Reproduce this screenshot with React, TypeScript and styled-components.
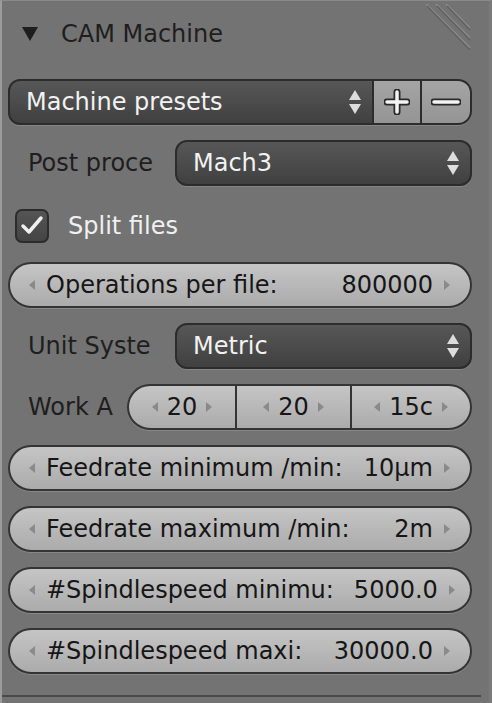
import React from "react";
import styled, { createGlobalStyle } from "styled-components";

const Global = createGlobalStyle`
  html, body { margin: 0; padding: 0; background: #737373; }
  * { box-sizing: border-box; }
`;

const Panel = styled.div`
  width: 492px;
  height: 703px;
  background: #737373;
  border-left: 2px solid #9c9c9c;
  border-top: 1px solid #8a8a8a;
  border-right: 3px solid #7a7a7a;
  font-family: "DejaVu Sans", sans-serif;
  display: flex;
  flex-direction: column;
  position: relative;
  overflow: hidden;
`;

const Header = styled.div`
  height: 72px;
  display: flex;
  align-items: center;
  padding-left: 19px;
  gap: 22px;
  color: #1e1e1e;
  font-size: 24px;
  padding-bottom: 7px;
`;

const Grip = styled.svg`
  position: absolute;
  right: 15px;
  top: 3px;
`;

const Body = styled.div`
  display: flex;
  flex-direction: column;
  padding: 6px 17px 0 6px;
`;

const Row = styled.div<{ $h?: number; $mb?: number }>`
  height: ${(p) => p.$h ?? 46}px;
  margin-bottom: ${(p) => p.$mb ?? 15}px;
  display: flex;
  align-items: center;
`;

const Label = styled.div<{ $w: number }>`
  width: ${(p) => p.$w}px;
  padding-left: 20px;
  font-size: 24px;
  color: #1e1e1e;
  white-space: nowrap;
  overflow: hidden;
`;

const Dropdown = styled.div<{ $left?: boolean }>`
  flex: 1;
  height: 100%;
  display: flex;
  align-items: center;
  justify-content: space-between;
  padding: 0 10px 0 16px;
  background: linear-gradient(#575757, #404040);
  border: 2px solid #2c2c2c;
  border-radius: ${(p) => (p.$left ? "12px 0 0 12px" : "12px")};
  color: #f2f2f2;
  font-size: 24px;
  box-shadow: 0 1px 0 #868686;
`;

const Tool = styled.div<{ $last?: boolean }>`
  width: ${(p) => (p.$last ? 50 : 48)}px;
  height: 100%;
  background: linear-gradient(#a4a4a4, #959595);
  border: 2px solid #2c2c2c;
  border-left: none;
  border-radius: ${(p) => (p.$last ? "0 14px 14px 0" : "0")};
  display: flex;
  align-items: center;
  justify-content: center;
  box-shadow: 0 1px 0 #868686;
`;

const Pill = styled.div`
  flex: 1;
  height: 100%;
  display: flex;
  border: 2px solid #343434;
  border-radius: 23px;
  overflow: hidden;
  background: linear-gradient(#c5c5c5, #ababab);
  box-shadow: 0 1px 0 #888;
`;

const Field = styled.div<{ $center?: boolean; $sep?: boolean; $w?: number }>`
  flex: ${(p) => (p.$w ? `0 0 ${p.$w}px` : "1")};
  display: flex;
  align-items: center;
  padding: 0 19px 0 18px;
  gap: 10px;
  font-size: 24px;
  color: #161616;
  border-left: ${(p) => (p.$sep ? "2px solid #343434" : "none")};
  justify-content: ${(p) => (p.$center ? "center" : "flex-start")};
  white-space: pre;
  ${(p) => (p.$center ? "padding: 0 6px; gap: 8px;" : "")}
`;

const Grow = styled.span`
  flex: 1;
`;

const Arrow = ({ dir }: { dir: "l" | "r" }) => (
  <svg width="8" height="12" viewBox="0 0 8 12">
    <path d={dir === "l" ? "M7 1 L1 6 L7 11 Z" : "M1 1 L7 6 L1 11 Z"} fill="#8a8a8a" />
  </svg>
);

const UpDown = () => (
  <svg width="14" height="28" viewBox="0 0 14 28">
    <path d="M7 2 L13 12 L1 12 Z" fill="#dcdcdc" />
    <path d="M7 26 L13 16 L1 16 Z" fill="#dcdcdc" />
  </svg>
);

const Check = styled.div`
  width: 34px;
  height: 34px;
  margin-left: 7px;
  margin-right: 19px;
  border: 2px solid #2c2c2c;
  border-radius: 7px;
  background: linear-gradient(#555, #444);
  display: flex;
  align-items: center;
  justify-content: center;
`;

const CheckText = styled.div`
  font-size: 24px;
  color: #f0f0f0;
`;

const Bottom = styled.div`
  position: absolute;
  left: 0;
  right: 8px;
  bottom: 6px;
  height: 2px;
  background: #4a4a4a;
`;

const Num = ({ label, value }: { label: string; value: string }) => (
  <Row>
    <Pill>
      <Field>
        <Arrow dir="l" />
        <span>{label}</span>
        <Grow />
        <span>{value}</span>
        <Arrow dir="r" />
      </Field>
    </Pill>
  </Row>
);

export default function App() {
  return (
    <>
      <Global />
      <Panel>
        <Grip width="48" height="52" viewBox="0 0 48 52">
          {[0, 10, 20].map((o) => (
            <g key={o}>
              <line x1={o} y1={0} x2={44} y2={44 - o} stroke="#888" strokeWidth="2" />
              <line x1={o + 1} y1={2} x2={44} y2={46 - o} stroke="#5f5f5f" strokeWidth="1.2" />
            </g>
          ))}
        </Grip>
        <Header>
          <svg width="18" height="16" viewBox="0 0 18 16">
            <path d="M1 1 L17 1 L9 15 Z" fill="#1e1e1e" />
          </svg>
          <span>CAM Machine</span>
        </Header>
        <Body>
          <Row>
            <Dropdown $left>
              <span>Machine presets</span>
              <UpDown />
            </Dropdown>
            <Tool>
              <svg width="26" height="26" viewBox="0 0 26 26">
                <path d="M13 3 V23 M3 13 H23" stroke="#2a2a2a" strokeWidth="7" strokeLinecap="round" />
                <path d="M13 3 V23 M3 13 H23" stroke="#f4f4f4" strokeWidth="3.5" strokeLinecap="round" />
              </svg>
            </Tool>
            <Tool $last>
              <svg width="30" height="14" viewBox="0 0 30 14">
                <path d="M3 7 H27" stroke="#2a2a2a" strokeWidth="7" strokeLinecap="round" />
                <path d="M3 7 H27" stroke="#f4f4f4" strokeWidth="3.5" strokeLinecap="round" />
              </svg>
            </Tool>
          </Row>
          <Row $mb={22}>
            <Label $w={167}>Post proce</Label>
            <Dropdown>
              <span>Mach3</span>
              <UpDown />
            </Dropdown>
          </Row>
          <Row $h={36} $mb={18}>
            <Check>
              <svg width="24" height="22" viewBox="0 0 24 22">
                <path d="M3 11 L9 17 L21 3" stroke="#f0f0f0" strokeWidth="3.5" fill="none" strokeLinecap="round" strokeLinejoin="round" />
              </svg>
            </Check>
            <CheckText>Split files</CheckText>
          </Row>
          <Num label="Operations per file:" value="800000" />
          <Row>
            <Label $w={167}>Unit Syste</Label>
            <Dropdown>
              <span>Metric</span>
              <UpDown />
            </Dropdown>
          </Row>
          <Row>
            <Label $w={119}>Work A</Label>
            <Pill>
              <Field $center $w={106}>
                <Arrow dir="l" />
                <span>20</span>
                <Arrow dir="r" />
              </Field>
              <Field $center $sep $w={115}>
                <Arrow dir="l" />
                <span>20</span>
                <Arrow dir="r" />
              </Field>
              <Field $center $sep>
                <Arrow dir="l" />
                <span>15c</span>
                <Arrow dir="r" />
              </Field>
            </Pill>
          </Row>
          <Num label="Feedrate minimum /min:" value="10µm" />
          <Num label="Feedrate maximum /min:" value="2m" />
          <Num label="#Spindlespeed minimu:" value="5000.0" />
          <Num label="#Spindlespeed maxi:" value="30000.0" />
        </Body>
        <Bottom />
      </Panel>
    </>
  );
}
